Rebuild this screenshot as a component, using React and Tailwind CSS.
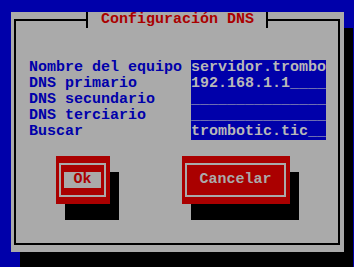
import React from "react";

const fields = [
  ["Nombre del equipo", "servidor.trombo"],
  ["DNS primario", "192.168.1.1____"],
  ["DNS secundario", "_______________"],
  ["DNS terciario", "_______________"],
  ["Buscar", "trombotic.tic__"],
];

// text-mode button: red block, light frame, label
function TermButton({ label, focused, width }) {
  return (
    <div
      className={`flex h-[48px] ${width} bg-[#aa0000] shadow-[9px_16px_0_0_#000]`}
    >
      <div className="flex flex-1 items-center justify-center mt-[7px] mb-[7px] ml-[3px] mr-[4px] border-2 border-[#aaaaaa]">
        <span
          className={
            focused
              ? "h-[16px] whitespace-pre bg-[#aaaaaa] text-[#aa0000]"
              : "h-[16px] whitespace-pre text-[#aaaaaa]"
          }
        >
          {` ${label} `}
        </span>
      </div>
    </div>
  );
}

export default function App() {
  return (
    <div className="w-[354px] h-[267px] overflow-hidden bg-[#0000aa] pl-[11px] pt-[12px] font-['Liberation_Mono',monospace] font-bold text-[15px] leading-[16px]">
      <div className="relative flex flex-col w-[333px] h-[240px] bg-[#aaaaaa] shadow-[9px_16px_0_0_#000]">
        <div className="flex-1 mt-[7px] mb-[7px] ml-[3px] mr-[4px] border-2 border-black pl-[13px] pt-[39px]">
          <div className="flex">
            <div className="flex flex-col w-[162px] text-[#0000aa] whitespace-pre">
              {fields.map(([name]) => (
                <span key={name} className="h-[16px]">
                  {name}
                </span>
              ))}
            </div>
            {/* entry column: one blue block, blanks shown as underscores */}
            <div className="flex flex-col w-[135px] bg-[#0000aa] text-[#b8b8b8] whitespace-pre">
              {fields.map(([name, value]) => (
                <span key={name} className="h-[16px]">
                  {value}
                </span>
              ))}
            </div>
          </div>

          <div className="flex mt-[16px] ml-[27px] gap-[72px]">
            <TermButton label="Ok" focused width="w-[54px]" />
            <TermButton label="Cancelar" width="w-[108px]" />
          </div>
        </div>

        {/* title sits over the top border line */}
        <div className="absolute left-[75px] top-0 flex h-[16px]">
          <div className="w-[2px] h-full bg-black" />
          <span className="w-[178px] pl-[13px] bg-[#aaaaaa] text-[#aa0000] whitespace-pre">
            Configuración DNS
          </span>
          <div className="w-[2px] h-full bg-black" />
        </div>
      </div>
    </div>
  );
}
